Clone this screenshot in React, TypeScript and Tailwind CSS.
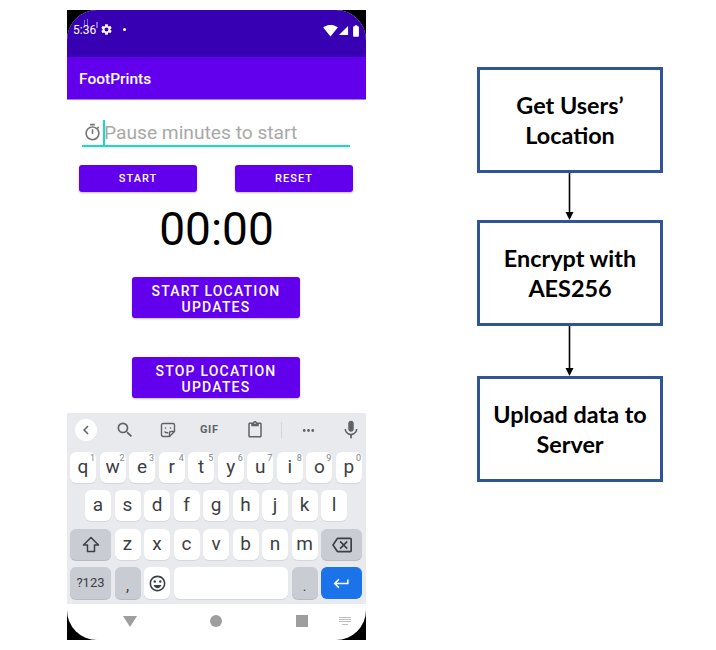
import { MdOutlineTimer, MdSettings, MdSignalWifi4Bar, MdSignalCellular4Bar, MdBatteryFull, MdSearch, MdOutlineContentPaste, MdMoreHoriz, MdMic, MdChevronLeft, MdOutlineBackspace, MdKeyboardReturn, MdOutlineEmojiEmotions } from "react-icons/md";

const roboto = "font-['Roboto',sans-serif]";

function Key({ label, hint }: { label: string; hint?: string }) {
  return (
    <div className="relative flex-1 h-full flex items-center justify-center bg-white rounded-[6px] shadow-[0_1px_0_#d5d7da] text-[19px] text-[#3c4043]">
      {label}
      {hint && <span className="absolute top-[1px] right-[1px] text-[9px] leading-[10px] text-[#80868b]">{hint}</span>}
    </div>
  );
}

function Arrow({ h }: { h: number }) {
  return (
    <svg width="186" height={h} viewBox={`0 0 186 ${h}`} className="block">
      <line x1="92.5" y1="0" x2="92.5" y2={h - 6} stroke="#000" strokeWidth="1.6" />
      <polygon points={`88.5,${h - 8} 96.5,${h - 8} 92.5,${h}`} fill="#000" />
    </svg>
  );
}

function Box({ lines }: { lines: string[] }) {
  return (
    <div className="w-[186px] h-[106px] border-[3px] border-[#2f5597] flex flex-col items-center justify-center font-['Lato',sans-serif] font-bold text-[23.4px] leading-[30px] text-black">
      {lines.map((l) => (
        <div key={l}>{l}</div>
      ))}
    </div>
  );
}

function PurpleButton({ lines, className }: { lines: string[]; className: string }) {
  return (
    <div className={`bg-[#6200ee] rounded-[3px] shadow-[0_1px_2px_rgba(0,0,0,0.25)] flex flex-col items-center justify-center text-white font-medium ${className}`}>
      {lines.map((l) => (
        <div key={l}>{l}</div>
      ))}
    </div>
  );
}

export default function App() {
  return (
    <div className={`w-[716px] h-[650px] bg-white flex items-start pt-[10px] pl-[67px] ${roboto}`}>
      <div className="w-[299px] h-[630px] bg-black shrink-0">
        <div className="w-full h-full bg-white rounded-[30px] overflow-hidden flex flex-col">
          <div className="h-[47px] bg-[#3700b3] flex items-start pt-[12px] pl-[6px] pr-[3px] text-white">
            <span className="relative text-[12px] leading-[16px] w-[27px]">
              5:36
              <span className="absolute left-[11px] top-[-2px] w-px h-[5px] bg-white/40" />
              <span className="absolute left-[14px] top-[-3px] w-px h-[6px] bg-white/40" />
              <span className="absolute left-[23px] top-0 w-[2px] h-[6px] bg-white/40" />
            </span>
            <MdSettings className="text-[13px] mt-[1px]" />
            <span className="w-[3px] h-[3px] rounded-full bg-white ml-[10px] mt-[6px]" />
            <div className="ml-auto flex items-center mt-[1px]">
              <MdSignalWifi4Bar className="text-[15px]" />
              <MdSignalCellular4Bar className="text-[11px]" />
              <MdBatteryFull className="text-[14px]" />
            </div>
          </div>
          <div className="h-[43px] bg-[#6200ee] border-b border-[#a47cf0] flex items-center pl-[12px] pt-[3px] text-white text-[15.5px] font-medium">
            FootPrints
          </div>
          <div className="h-[313px] flex flex-col items-start">
            <div className="ml-[15px] w-[268px] h-[34px] mt-[13px] border-b-2 border-[#14dcc8] flex items-end text-[19.2px] text-[#a8a8a8] shrink-0">
              <MdOutlineTimer className="text-[19px] text-[#757575] mb-[3px] ml-px shrink-0" />
              <span className="w-[2px] h-[25px] bg-[#14dcc8] ml-[1px] shrink-0 mr-[-1px]" />
              <span className="leading-[25px] whitespace-nowrap">Pause minutes to start</span>
            </div>
            <div className="ml-[12px] w-[274px] mt-[18px] flex justify-between shrink-0">
              <PurpleButton lines={["START"]} className="w-[118px] h-[27px] pt-[2px] text-[11px] tracking-[1px]" />
              <PurpleButton lines={["RESET"]} className="w-[118px] h-[27px] pt-[2px] text-[11px] tracking-[1px]" />
            </div>
            <div className="w-full mt-[9px] text-[46px] leading-[56px] text-center text-black shrink-0">00:00</div>
            <PurpleButton lines={["START LOCATION", "UPDATES"]} className="ml-[65px] w-[168px] h-[41px] mt-[20px] pt-[2px] text-[14px] leading-[16px] tracking-[1.2px] shrink-0" />
            <PurpleButton lines={["STOP LOCATION", "UPDATES"]} className="ml-[65px] w-[168px] h-[41px] mt-[39px] pt-[2px] text-[14px] leading-[16px] tracking-[1.2px] shrink-0" />
          </div>
          <div className="h-[191px] bg-[#e8eaed] pl-[3px] pr-[4px] shrink-0 flex flex-col">
            <div className="h-[39px] pb-[5px] flex items-center text-[#5f6368] shrink-0">
              <div className="w-[22px] h-[22px] ml-[5px] rounded-full bg-white flex items-center justify-center shrink-0">
                <MdChevronLeft className="text-[18px]" />
              </div>
              <MdSearch className="text-[20px] ml-[18px] shrink-0" />
              <svg width="16" height="16" viewBox="0 0 16 16" className="ml-[25px] shrink-0" fill="none" stroke="#5f6368" strokeWidth="1.4">
                <path d="M3 1.5h10a1.5 1.5 0 0 1 1.5 1.5v6.5l-5 5H3A1.5 1.5 0 0 1 1.5 13V3A1.5 1.5 0 0 1 3 1.5z" />
                <path d="M14.5 9.5h-3.5a1.5 1.5 0 0 0-1.5 1.5v3.5" />
                <circle cx="5.5" cy="6" r="0.8" fill="#5f6368" stroke="none" />
                <circle cx="10.5" cy="6" r="0.8" fill="#5f6368" stroke="none" />
                <path d="M4.5 9.5c1 1.2 2.5 1.5 3.8 1" />
              </svg>
              <span className="ml-[24px] w-[20px] text-[11px] font-bold tracking-[0.6px] shrink-0">GIF</span>
              <MdOutlineContentPaste className="text-[18px] ml-[26px] shrink-0" />
              <span className="w-px h-[16px] bg-[#d5d7da] ml-[17px] shrink-0" />
              <MdMoreHoriz className="text-[17px] ml-[18px] shrink-0" />
              <MdMic className="text-[22px] ml-[23px] shrink-0" />
            </div>
            <div className="h-[31px] flex gap-[3.5px] shrink-0">
              {["q", "w", "e", "r", "t", "y", "u", "i", "o", "p"].map((k, i) => (
                <Key key={k} label={k} hint={String((i + 1) % 10)} />
              ))}
            </div>
            <div className="h-[31px] mt-[7px] px-[15px] flex gap-[3.5px] shrink-0">
              {["a", "s", "d", "f", "g", "h", "j", "k", "l"].map((k) => (
                <Key key={k} label={k} />
              ))}
            </div>
            <div className="h-[31px] mt-[8px] flex gap-[3.5px] shrink-0">
              <div className="w-[41px] h-full bg-[#c9ccd3] rounded-[6px] flex items-center justify-center shadow-[0_1px_0_#b8bbc2] shrink-0">
                <svg width="18" height="17" viewBox="0 0 18 17" fill="none" stroke="#3c4043" strokeWidth="1.5" strokeLinejoin="round">
                  <path d="M9 1.5 1.5 9H5.5v6.5h7V9h4z" />
                </svg>
              </div>
              {["z", "x", "c", "v", "b", "n", "m"].map((k) => (
                <Key key={k} label={k} />
              ))}
              <div className="w-[41px] h-full bg-[#c9ccd3] rounded-[6px] flex items-center justify-center shadow-[0_1px_0_#b8bbc2] shrink-0">
                <MdOutlineBackspace className="text-[20px] text-[#3c4043]" />
              </div>
            </div>
            <div className="h-[32px] mt-[7px] flex gap-[3.5px] shrink-0">
              <div className="w-[41px] h-full bg-[#c9ccd3] rounded-[6px] flex items-center justify-center text-[13px] text-[#3c4043] shadow-[0_1px_0_#b8bbc2] shrink-0">?123</div>
              <div className="w-[26px] h-full bg-[#c9ccd3] rounded-[6px] flex items-center justify-center text-[16px] text-[#3c4043] pt-[6px] shadow-[0_1px_0_#b8bbc2] shrink-0">,</div>
              <div className="w-[26px] h-full bg-white rounded-[6px] flex items-center justify-center shadow-[0_1px_0_#d5d7da] shrink-0">
                <MdOutlineEmojiEmotions className="text-[19px] text-[#3c4043]" />
              </div>
              <div className="flex-1 h-full bg-white rounded-[6px] shadow-[0_1px_0_#d5d7da]" />
              <div className="w-[26px] h-full bg-[#c9ccd3] rounded-[6px] flex items-center justify-center text-[14px] text-[#3c4043] pt-[6px] shadow-[0_1px_0_#b8bbc2] shrink-0">.</div>
              <div className="w-[41px] h-full bg-[#1a73e8] rounded-[6px] flex items-center justify-center shrink-0">
                <MdKeyboardReturn className="text-[19px] text-white" />
              </div>
            </div>
          </div>
          <div className="flex-1 flex items-center pb-[2px] pl-[56px]">
            <svg width="14" height="11" viewBox="0 0 14 11" className="shrink-0"><polygon points="0,0 14,0 7,11" fill="#9e9e9e" /></svg>
            <span className="w-[12px] h-[12px] rounded-full bg-[#9e9e9e] ml-[73px] shrink-0" />
            <span className="w-[12px] h-[12px] bg-[#9e9e9e] ml-[74px] shrink-0" />
            <svg width="14" height="10" viewBox="0 0 14 10" className="ml-[30px] shrink-0" fill="#bdbdbd">
              <rect x="1" y="1" width="12" height="1" strokeDasharray="1 1" />
              <rect x="1" y="3" width="12" height="1" />
              <rect x="1" y="5" width="12" height="1" />
              <rect x="4" y="8" width="6" height="1" />
            </svg>
          </div>
        </div>
      </div>
      <div className="ml-[111px] pt-[57px] flex flex-col shrink-0">
        <Box lines={["Get Users’", "Location"]} />
        <Arrow h={47} />
        <Box lines={["Encrypt with", "AES256"]} />
        <Arrow h={50} />
        <Box lines={["Upload data to", "Server"]} />
      </div>
    </div>
  );
}
